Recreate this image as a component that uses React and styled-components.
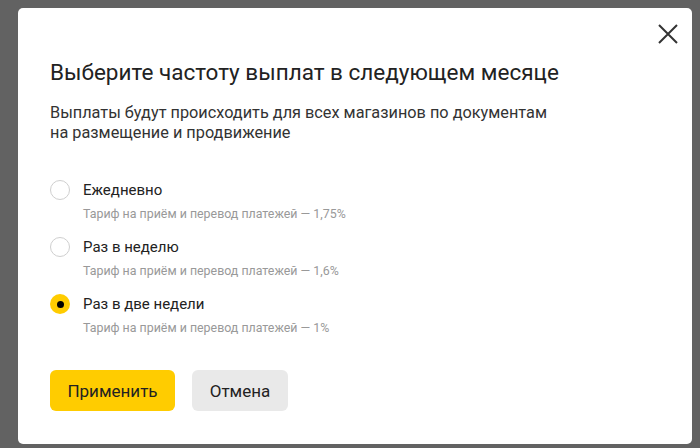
import styled, { createGlobalStyle } from "styled-components";

const Global = createGlobalStyle`
  html, body {
    margin: 0;
    padding: 0;
    background: #626262;
    font-family: Roboto, "Liberation Sans", sans-serif;
  }
`;

const Page = styled.div`
  width: 700px;
  height: 448px;
  padding: 8px 8px 4px 18px;
  box-sizing: border-box;
  display: flex;
`;

const Modal = styled.div`
  flex: 1;
  background: #fff;
  border-radius: 5px;
  padding: 50px 32px 32px 32px;
  position: relative;
  display: flex;
  flex-direction: column;
`;

const Close = styled.button`
  position: absolute;
  top: 14px;
  right: 12px;
  width: 24px;
  height: 24px;
  padding: 0;
  border: none;
  background: none;
  color: #333;
  display: flex;
  align-items: center;
  justify-content: center;
`;

const Title = styled.h2`
  margin: 0;
  font-size: 22.5px;
  font-weight: 400;
  color: #222;
  line-height: 28px;
`;

const Desc = styled.p`
  margin: 17px 0 0;
  font-size: 16.3px;
  line-height: 20px;
  color: #333;
  width: 505px;
`;

const Options = styled.div`
  display: flex;
  flex-direction: column;
  gap: 15px;
  margin-top: 37px;
`;

const Option = styled.label`
  display: flex;
  align-items: flex-start;
  gap: 13px;
`;

const Radio = styled.span`
  width: 20px;
  height: 20px;
  box-sizing: border-box;
  border-radius: 50%;
  flex: none;
  border: ${(p) => (p.checked ? "none" : "1.5px solid #cfcfcf")};
  background: ${(p) => (p.checked ? "#ffcc00" : "#fff")};
  display: flex;
  align-items: center;
  justify-content: center;
  &::after {
    content: "";
    display: ${(p) => (p.checked ? "block" : "none")};
    width: 7px;
    height: 7px;
    border-radius: 50%;
    background: #000;
  }
`;

const Texts = styled.div`
  display: flex;
  flex-direction: column;
  gap: 6px;
`;

const Label = styled.div`
  font-size: 15px;
  line-height: 20px;
  color: #222;
`;

const Hint = styled.div`
  font-size: 12.4px;
  line-height: 16px;
  color: #999;
`;

const Actions = styled.div`
  display: flex;
  gap: 17px;
  margin-top: 34px;
`;

const Button = styled.button`
  height: 41px;
  padding: 0;
  border: none;
  border-radius: 6px;
  font-family: inherit;
  font-size: 17px;
  color: #222;
  background: ${(p) => (p.primary ? "#ffcc00" : "#e9e9e9")};
  width: ${(p) => p.w}px;
`;

const options = [
  { label: "Ежедневно", rate: "1,75%" },
  { label: "Раз в неделю", rate: "1,6%" },
  { label: "Раз в две недели", rate: "1%", checked: true },
];

export default function App() {
  return (
    <Page>
      <Global />
      <Modal>
        <Close>
          <svg width="22" height="22" viewBox="0 0 22 22">
            <path d="M2 2L20 20M20 2L2 20" stroke="currentColor" strokeWidth="2" />
          </svg>
        </Close>
        <Title>Выберите частоту выплат в следующем месяце</Title>
        <Desc>
          Выплаты будут происходить для всех магазинов по документам на
          размещение и продвижение
        </Desc>
        <Options>
          {options.map((o) => (
            <Option key={o.label}>
              <Radio checked={o.checked} />
              <Texts>
                <Label>{o.label}</Label>
                <Hint>Тариф на приём и перевод платежей — {o.rate}</Hint>
              </Texts>
            </Option>
          ))}
        </Options>
        <Actions>
          <Button primary w={125}>Применить</Button>
          <Button w={96}>Отмена</Button>
        </Actions>
      </Modal>
    </Page>
  );
}
